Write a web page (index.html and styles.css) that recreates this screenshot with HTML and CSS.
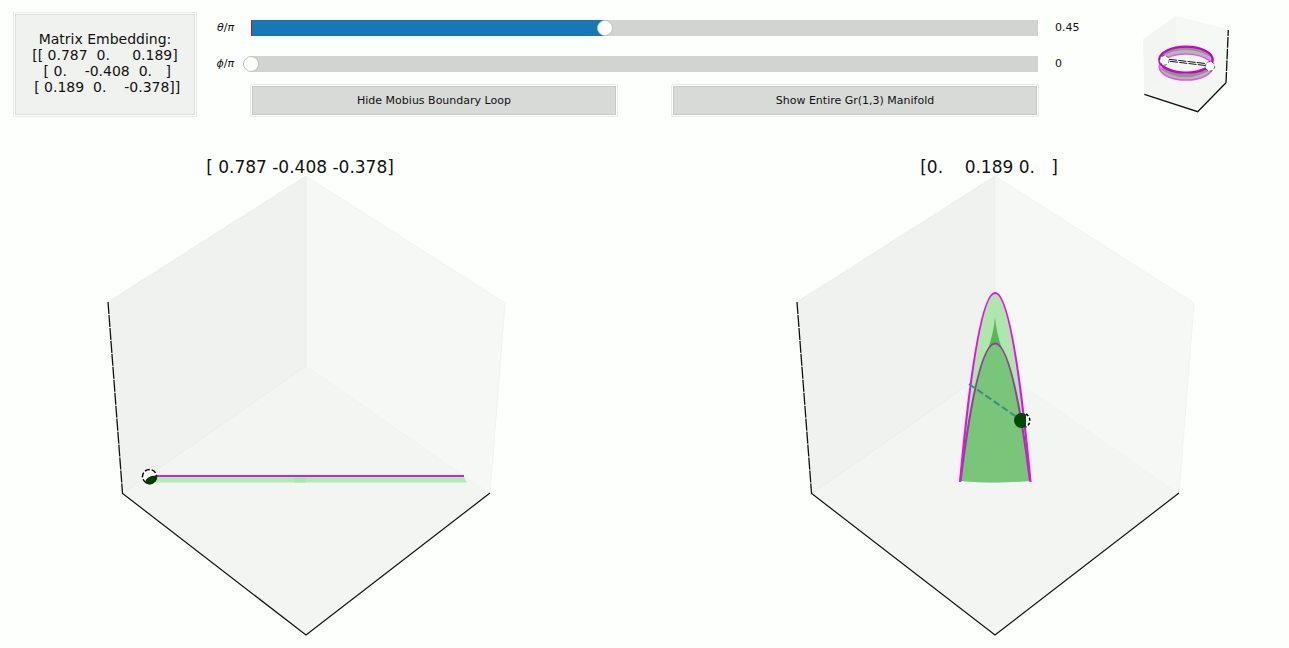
FILE: index.html
```html
<!DOCTYPE html>
<html lang="en">
<head>
<meta charset="utf-8">
<meta name="viewport" content="width=device-width, initial-scale=1">
<title>Matrix Embedding</title>
<link rel="stylesheet" href="styles.css">
</head>
<body>
<header class="top">
  <pre class="matrix">Matrix Embedding:
[[ 0.787  0.     0.189]
 [ 0.    -0.408  0.   ]
 [ 0.189  0.    -0.378]]</pre>
  <div class="controls">
    <label class="name" for="theta"><i>θ</i>/<i>π</i></label>
    <div class="track" style="--value: 45%"><input class="range" id="theta" type="range" min="0" max="1" step="0.01" value="0.45"></div>
    <output class="value" for="theta">0.45</output>
    <label class="name" for="phi"><i>ϕ</i>/<i>π</i></label>
    <div class="track track-empty"><input class="range" id="phi" type="range" min="0" max="1" step="0.01" value="0"></div>
    <output class="value" for="phi">0</output>
    <div class="buttons">
      <button class="button" type="button">Hide Mobius Boundary Loop</button>
      <button class="button" type="button">Show Entire Gr(1,3) Manifold</button>
    </div>
  </div>
  <svg class="mini" viewBox="60 36 300 309" role="img" aria-label="Mobius band">
    <path d="M166 50 69 120 73 283 168 209Z" fill="#f3f5f2"/>
    <path d="M166 50 325 90 318 248 168 209Z" fill="#f6f8f5"/>
    <path d="M168 209 73 283 233 335 318 248Z" fill="#f4f6f3"/>
    <path d="M69 120 166 50 325 90M166 50V209" fill="none" stroke="#eff1ee" stroke-width="2"/>
    <path d="M73 283 233 335 318 248" fill="none" stroke="#111" stroke-width="4"/>
    <path d="M318 248 325 90" fill="none" stroke="#111" stroke-width="4" stroke-dasharray="32 3"/>
    <path fill-rule="evenodd" d="M118 178A80 38 0 0 1 278 178V202A80 38 0 0 1 118 202ZM122 193A76 30 0 0 0 274 193A76 32 0 0 0 122 193Z" fill="#b5b7b5"/>
    <path d="M125 165Q195 125 271 165" fill="none" stroke="#929492" stroke-width="8"/>
    <path d="M126 204Q195 250 271 204" fill="none" stroke="#929492" stroke-width="10"/>
    <ellipse cx="198" cy="201" rx="80" ry="39" fill="none" stroke="#ea55e6" stroke-width="5"/>
    <ellipse cx="198" cy="179" rx="80" ry="39" fill="none" stroke="#cb00cb" stroke-width="7"/>
    <path d="M133 180 270 198" stroke="#fff" stroke-width="9"/>
    <path d="M147 178 260 191M150 184 260 197" stroke="#111" stroke-width="3" stroke-dasharray="24 4"/>
    <circle cx="133" cy="181" r="14" fill="#fff" stroke="#111" stroke-width="2" stroke-dasharray="8 6"/>
    <circle cx="270" cy="199" r="14" fill="#fff" stroke="#111" stroke-width="2" stroke-dasharray="8 6"/>
  </svg>
</header>
<main class="plots">
  <figure class="plot">
    <figcaption class="title">[ 0.787 -0.408 -0.378]</figcaption>
    <svg class="scene" viewBox="0 1 600 472" role="img" aria-label="Diagonal entries">
      <g id="cube">
        <path d="M306 1 108 127 122 319 306 191Z" fill="#f0f2ef"/>
        <path d="M306 1 505 128 490 319 306 191Z" fill="#f6f8f5"/>
        <path d="M306 191 122 319 306 461 490 319Z" fill="#f3f5f2"/>
        <path d="M108 127 306 1V191L122 319" fill="none" stroke="#ebedea"/>
        <path d="M306 1 505 128 490 319 306 191" fill="none" stroke="#f1f3f0"/>
        <path d="M122 318 306 460 490 318" fill="none" stroke="#111" stroke-width="1.2"/>
        <path d="M108 127 122.500 318" fill="none" stroke="#111" stroke-width="1.3" stroke-dasharray="12 1"/>
      </g>
      <path d="M148 302H464L467 307.500H148Z" fill="#b0ecb0"/>
      <path d="M294 302H306V307.500H294Z" fill="#a5e9a8"/>
      <path d="M150 301H464" stroke="#cf22d4" stroke-width="2"/>
      <circle cx="149.500" cy="301.500" r="7" fill="#fff" stroke="#000" stroke-width="1.500" stroke-dasharray="5 2"/>
      <path d="M145 308Q146 300 157 300.500A7.700 7.700 0 0 1 145 308Z" fill="#003c00"/>
    </svg>
  </figure>
  <figure class="plot">
    <figcaption class="title">[0.    0.189 0.   ]</figcaption>
    <svg class="scene" viewBox="0 1 600 472" role="img" aria-label="Off-diagonal entries">
      <use href="#cube"/>
      <path d="M271 306Q306 -71 341 306Q306 309 271 306Z" fill="#aee6ae"/>
      <path d="M306 142Q307 157 314 177L306 171 298 177Q305 157 306 142Z" fill="#58b858"/>
      <path d="M272 306Q306 31 340.500 306Q306 309 272 306Z" fill="#79c579"/>
      <path d="M271.500 306Q306 31 341 306" fill="none" stroke="#8a4890" stroke-width="2.200"/>
      <path d="M271 307Q306 -71 341.500 307" fill="none" stroke="#e610e6" stroke-width="2.200"/>
      <path d="M280 209 332 245" stroke="#3d8b80" stroke-width="2" stroke-dasharray="7 3"/>
      <circle cx="332.500" cy="245.500" r="7.500" fill="#004800"/>
      <path d="M337 239A7.500 7.500 0 0 1 337 252Z" fill="#fff"/>
      <path d="M337 239A7.500 7.500 0 0 1 337 252" fill="none" stroke="#000" stroke-width="1.500" stroke-dasharray="3 2"/>
    </svg>
  </figure>
</main>
</body>
</html>
```

FILE: styles.css
```css
* {
  box-sizing: border-box;
}

body {
  margin: 0;
  background: #fdfffc;
  color: #111;
  font: 11px/16px "DejaVu Sans", sans-serif;
}

.top {
  display: grid;
  grid-template-columns: 184px 1fr 100px;
  align-items: start;
  padding: 12px 49px 0 13px;
}

.matrix {
  display: flex;
  align-items: center;
  justify-content: center;
  min-height: 105px;
  margin: 0;
  padding-bottom: 3px;
  border: 1px solid #e8eae8;
  background: #f0f2ef;
  box-shadow: inset 0 0 0 1px #fff, inset 0 0 0 2px #dfe1de;
  font: 14px/16px "DejaVu Sans", sans-serif;
  text-align: center;
}

.controls {
  display: grid;
  grid-template-columns: 37px 1fr 68px;
  column-gap: 17px;
  row-gap: 20px;
  padding-top: 8px;
  margin-right: 17px;
}

.name {
  text-align: right;
}

.track {
  height: 16px;
  background:
    linear-gradient(#c4161c, #c4161c) 0 0 / 1px 100% no-repeat,
    linear-gradient(#1778b5, #1778b5) 0 0 / var(--value) 100% no-repeat,
    #d2d4d1;
}

.track-empty {
  background: #d2d4d1;
}

.range {
  display: block;
  width: calc(100% + 16px);
  height: 16px;
  margin: 0 -8px;
  background: transparent;
  appearance: none;
}

.range::-webkit-slider-thumb {
  width: 16px;
  height: 16px;
  border: 1px solid #bfc1be;
  border-radius: 50%;
  background: #fff;
  appearance: none;
}

.buttons {
  display: grid;
  grid-column: 2;
  grid-template-columns: 1fr 1fr;
  gap: 53px;
  margin: -8px -1px 0;
}

.button {
  height: 33px;
  padding: 0 8px;
  border: 1px solid #e8eae8;
  border-radius: 2px;
  background: #d8dad7;
  box-shadow: inset 0 0 0 1px #fff, inset 0 0 0 2px #c8cac7;
  color: inherit;
  font: inherit;
}

.mini {
  display: block;
  width: 100%;
}

.plots {
  display: grid;
  grid-template-columns: 1fr 1fr;
  gap: 89px;
  padding-top: 41px;
}

.plot {
  margin: 0;
}

.title {
  font-size: 17px;
  line-height: 18px;
  text-align: center;
  white-space: pre;
}

.scene {
  display: block;
  width: 100%;
}
```
